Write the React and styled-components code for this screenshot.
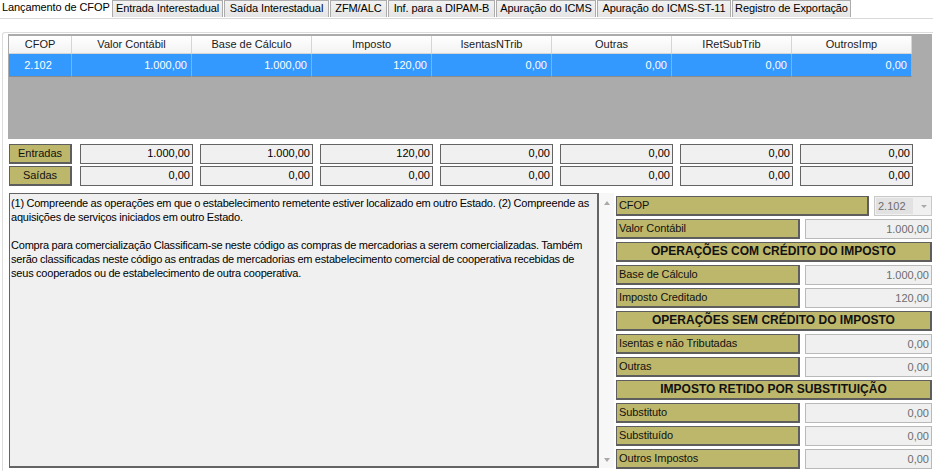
import React from "react";
import styled, { createGlobalStyle } from "styled-components";

const Global = createGlobalStyle`
  html, body { margin: 0; padding: 0; background: #ffffff; }
  body { font-family: "Liberation Sans", Arial, sans-serif; font-size: 11px; color: #000; }
  * { box-sizing: border-box; }
`;

const Screen = styled.div`
  width: 933px;
  height: 471px;
  overflow: hidden;
  background: #ffffff;
`;

const TabBar = styled.div`
  display: flex;
  align-items: flex-end;
  height: 19px;
  border-bottom: 1px solid #d9d9d9;
`;

const ActiveTab = styled.div`
  width: 112px;
  height: 19px;
  padding: 2px 0 0 2px;
  font-size: 11px;
  letter-spacing: -0.1px;
  background: #ffffff;
  white-space: nowrap;
`;

const Tab = styled.div`
  width: ${(p) => p.w}px;
  height: 17px;
  margin-right: 1px;
  margin-bottom: 1px;
  border: 1px solid #acacac;
  border-bottom: none;
  background: linear-gradient(#f2f2f2, #e5e5e5);
  font-size: 11px;
  letter-spacing: -0.1px;
  text-align: center;
  line-height: 15px;
  white-space: nowrap;
  overflow: hidden;
`;

const Page = styled.div`
  margin: 13px 0 0 2px;
  height: 440px;
  border: 1px solid #dcdcdc;
  border-right: none;
  border-bottom: none;
  border-radius: 3px 0 0 0;
  padding: 1px 0 0 5px;
`;

const Grid = styled.div`
  width: 924px;
  height: 105px;
  background: #ababab;
  padding: 2px 0 0 1px;
`;

const GridRow = styled.div`
  display: grid;
  grid-template-columns: 63px repeat(7, 120px);
  height: ${(p) => p.h}px;
`;

const HeadCell = styled.div`
  background: linear-gradient(#ffffff, #f3f3f3);
  border-right: 1px solid #d5d5d5;
  border-bottom: 1px solid #d5d5d5;
  text-align: center;
  line-height: 17px;
  font-size: 11px;
  color: #1a1a1a;
`;

const DataCell = styled.div`
  background: #3399ff;
  border-right: 1px solid #6fb6ff;
  border-bottom: 1px solid #8c8c8c;
  color: #ffffff;
  font-size: 11px;
  line-height: 22px;
  text-align: ${(p) => (p.center ? "center" : "right")};
  padding-right: 4px;
`;

const TotalsBlock = styled.div`
  display: flex;
  flex-direction: column;
  gap: 2px;
  margin-top: 5px;
`;

const TotalsRow = styled.div`
  display: grid;
  grid-template-columns: 64px repeat(7, 113px);
  column-gap: 7px;
  height: 20px;
  padding-left: 1px;
`;

const OliveButton = styled.div`
  width: 63px;
  height: 20px;
  background: #bdb76b;
  border: 1px solid #5e5e5e;
  border-right-width: 2px;
  border-bottom-width: 2px;
  text-align: center;
  line-height: 17px;
  font-size: 11px;
  color: #111;
`;

const TotalBox = styled.div`
  height: 20px;
  background: #f0f0f0;
  border: 1px solid #646464;
  text-align: right;
  padding: 1px 2px 0 0;
  font-size: 11px;
  line-height: 15px;
`;

const Bottom = styled.div`
  display: flex;
  margin-top: 7px;
  margin-left: 1px;
`;

const Memo = styled.div`
  width: 590px;
  height: 275px;
  background: #f0f0f0;
  border: 1px solid #646464;
  border-right-width: 2px;
  border-bottom-width: 2px;
  padding: 2px 1px;
  font-size: 11px;
  line-height: 14px;
  letter-spacing: -0.2px;
  word-spacing: -0.3px;
  white-space: pre-wrap;
`;

const ScrollBar = styled.div`
  width: 15px;
  height: 275px;
  background: #f7f7f7;
  display: flex;
  flex-direction: column;
  justify-content: space-between;
  align-items: center;
  padding: 8px 0 6px;
`;

const Arrow = styled.div`
  width: 0;
  height: 0;
  border-left: 3.5px solid transparent;
  border-right: 3.5px solid transparent;
  ${(p) => (p.down ? "border-top: 4px solid #a9a9a9;" : "border-bottom: 4px solid #a9a9a9;")}
`;

const Side = styled.div`
  margin-left: 2px;
  width: 316px;
  display: flex;
  flex-direction: column;
  gap: 3px;
  padding-top: 3px;
`;

const SideRow = styled.div`
  display: flex;
  justify-content: space-between;
  height: 20px;
`;

const Label = styled.div`
  width: ${(p) => p.w}px;
  height: 20px;
  background: #bdb76b;
  border: 1px solid #5e5e5e;
  border-right-width: 2px;
  border-bottom-width: 2px;
  padding-left: 2px;
  font-size: 11px;
  letter-spacing: -0.1px;
  line-height: 17px;
  color: #111;
  white-space: nowrap;
`;

const SectionHead = styled(Label)`
  width: 316px;
  height: 20px;
  text-align: center;
  padding: 0;
  font-weight: bold;
  font-size: 12px;
  letter-spacing: 0;
  line-height: 16px;
`;

const ValueBox = styled.div`
  width: 127px;
  height: 20px;
  background: #f0f0f0;
  border: 1px solid #b9b9b9;
  color: #6d6d6d;
  text-align: right;
  padding-right: 2px;
  font-size: 11px;
  line-height: 18px;
`;

const Combo = styled.div`
  width: 58px;
  height: 20px;
  background: #f0f0f0;
  border: 1px solid #c9c9c9;
  display: flex;
  align-items: center;
  padding: 0 1px;
`;

const ComboText = styled.div`
  width: 37px;
  height: 16px;
  background: #e2e2e2;
  color: #6d6d6d;
  font-size: 11px;
  line-height: 16px;
  padding-left: 2px;
`;

const ComboArrow = styled.div`
  margin-left: 8px;
  width: 0;
  height: 0;
  border-left: 3px solid transparent;
  border-right: 3px solid transparent;
  border-top: 3px solid #a9a9a9;
`;

const tabs = [
  ["Entrada Interestadual", 111],
  ["Saída Interestadual", 105],
  ["ZFM/ALC", 57],
  ["Inf. para a DIPAM-B", 107],
  ["Apuração do ICMS", 100],
  ["Apuração do ICMS-ST-11", 134],
  ["Registro de Exportação", 119],
];

const headers = ["CFOP", "Valor Contábil", "Base de Cálculo", "Imposto", "IsentasNTrib", "Outras", "IRetSubTrib", "OutrosImp"];
const row = ["2.102", "1.000,00", "1.000,00", "120,00", "0,00", "0,00", "0,00", "0,00"];
const entradas = ["1.000,00", "1.000,00", "120,00", "0,00", "0,00", "0,00", "0,00"];
const saidas = ["0,00", "0,00", "0,00", "0,00", "0,00", "0,00", "0,00"];

const memoText =
  "(1) Compreende as operações em que o estabelecimento remetente estiver localizado em outro Estado. (2) Compreende as aquisições de serviços iniciados em outro Estado.\n\nCompra para comercialização Classificam-se neste código as compras de mercadorias a serem comercializadas. Também serão classificadas neste código as entradas de mercadorias em estabelecimento comercial de cooperativa recebidas de seus cooperados ou de estabelecimento de outra cooperativa.";

const sideRows = [
  ["Valor Contábil", "1.000,00"],
  ["OPERAÇÕES COM CRÉDITO DO IMPOSTO"],
  ["Base de Cálculo", "1.000,00"],
  ["Imposto Creditado", "120,00"],
  ["OPERAÇÕES SEM CRÉDITO DO IMPOSTO"],
  ["Isentas e não Tributadas", "0,00"],
  ["Outras", "0,00"],
  ["IMPOSTO RETIDO POR SUBSTITUIÇÃO"],
  ["Substituto", "0,00"],
  ["Substituído", "0,00"],
  ["Outros Impostos", "0,00"],
];

export default function App() {
  return (
    <Screen>
      <Global />
      <TabBar>
        <ActiveTab>Lançamento de CFOP</ActiveTab>
        {tabs.map(([t, w]) => (
          <Tab key={t} w={w}>{t}</Tab>
        ))}
      </TabBar>
      <Page>
        <Grid>
          <GridRow h={18}>
            {headers.map((h) => (
              <HeadCell key={h}>{h}</HeadCell>
            ))}
          </GridRow>
          <GridRow h={22}>
            {row.map((v, i) => (
              <DataCell key={i} center={i === 0}>{v}</DataCell>
            ))}
          </GridRow>
        </Grid>
        <TotalsBlock>
          <TotalsRow>
            <OliveButton>Entradas</OliveButton>
            {entradas.map((v, i) => (
              <TotalBox key={i}>{v}</TotalBox>
            ))}
          </TotalsRow>
          <TotalsRow>
            <OliveButton>Saídas</OliveButton>
            {saidas.map((v, i) => (
              <TotalBox key={i}>{v}</TotalBox>
            ))}
          </TotalsRow>
        </TotalsBlock>
        <Bottom>
          <Memo>{memoText}</Memo>
          <ScrollBar>
            <Arrow />
            <Arrow down />
          </ScrollBar>
          <Side>
            <SideRow>
              <Label w={253}>CFOP</Label>
              <Combo>
                <ComboText>2.102</ComboText>
                <ComboArrow />
              </Combo>
            </SideRow>
            {sideRows.map((r) =>
              r.length === 1 ? (
                <SectionHead key={r[0]}>{r[0]}</SectionHead>
              ) : (
                <SideRow key={r[0]}>
                  <Label w={184}>{r[0]}</Label>
                  <ValueBox>{r[1]}</ValueBox>
                </SideRow>
              )
            )}
          </Side>
        </Bottom>
      </Page>
    </Screen>
  );
}
